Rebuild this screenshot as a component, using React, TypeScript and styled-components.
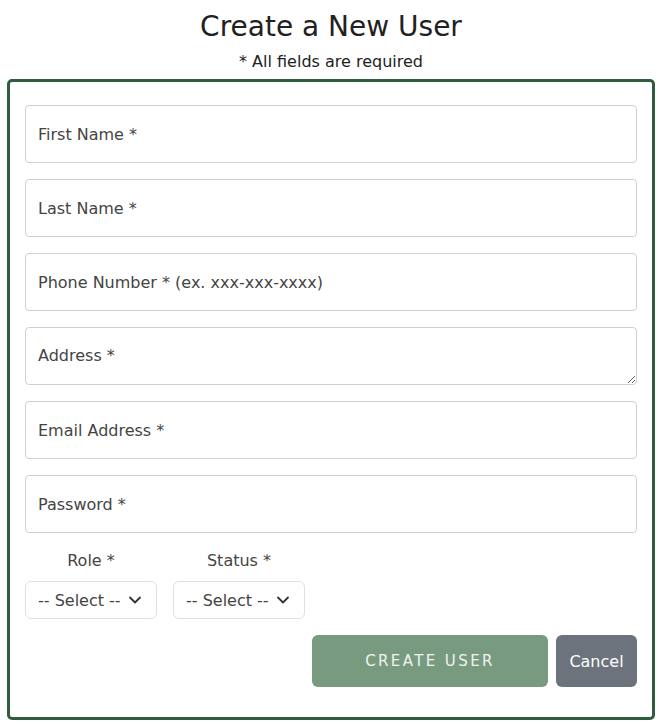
import React from 'react';
import styled, { createGlobalStyle } from 'styled-components';
import { ChevronDown } from 'lucide-react';

const GlobalStyle = createGlobalStyle`
  body {
    margin: 0;
    background: #ffffff;
    font-family: "DejaVu Sans", "Open Sans", sans-serif;
    color: #222;
  }
`;

const Page = styled.div`
  width: 662px;
  padding: 0 7px 8px;
  box-sizing: border-box;
`;

const Title = styled.h1`
  margin: 0;
  padding-top: 8px;
  font-size: 28px;
  font-weight: 400;
  line-height: 38px;
  text-align: center;
  color: #212121;
`;

const Subtitle = styled.p`
  margin: 6px 0 7px;
  font-size: 16px;
  line-height: 20px;
  text-align: center;
  color: #222;
`;

const Card = styled.form`
  border: 3px solid #2f5d3d;
  border-radius: 5px;
  padding: 23px 15px 30px;
  display: flex;
  flex-direction: column;
  gap: 16px;
`;

const TextInput = styled.input`
  height: 58px;
  box-sizing: border-box;
  padding: 0 12px;
  border: 1px solid #cfcfcf;
  border-radius: 4px;
  font-family: inherit;
  font-size: 16px;
  color: #333;
  outline: none;

  &::placeholder {
    color: #444;
  }
`;

const TextArea = styled.textarea`
  height: 58px;
  box-sizing: border-box;
  padding: 18px 12px 0;
  border: 1px solid #cfcfcf;
  border-radius: 4px;
  font-family: inherit;
  font-size: 16px;
  line-height: 20px;
  color: #333;
  outline: none;

  &::placeholder {
    color: #444;
  }
`;

const SelectRow = styled.div`
  display: flex;
  gap: 16px;
  margin-top: 2px;
`;

const SelectGroup = styled.label`
  display: flex;
  flex-direction: column;
  align-items: center;
  gap: 10px;
  width: 132px;
  font-size: 16px;
  line-height: 20px;
  color: #444;
`;

const SelectWrap = styled.div`
  position: relative;
  width: 132px;
  height: 38px;

  svg {
    position: absolute;
    right: 12px;
    top: 9px;
    pointer-events: none;
    color: #333;
  }
`;

const Select = styled.select`
  appearance: none;
  width: 100%;
  height: 100%;
  padding: 0 0 0 12px;
  border: 1px solid #e0e0e0;
  border-radius: 6px;
  background: #fff;
  font-family: inherit;
  font-size: 16px;
  color: #444;
  outline: none;
`;

const ButtonRow = styled.div`
  display: flex;
  justify-content: flex-end;
  gap: 8px;
`;

const Button = styled.button<{ $variant: 'primary' | 'secondary' }>`
  height: 52px;
  border: none;
  border-radius: 6px;
  font-family: inherit;
  font-size: ${p => (p.$variant === 'primary' ? '15px' : '16px')};
  letter-spacing: ${p => (p.$variant === 'primary' ? '2.4px' : '0')};
  text-transform: ${p => (p.$variant === 'primary' ? 'uppercase' : 'none')};
  width: ${p => (p.$variant === 'primary' ? '236px' : '81px')};
  background: ${p => (p.$variant === 'primary' ? '#789b80' : '#6c737d')};
  color: ${p => (p.$variant === 'primary' ? '#eef3ef' : '#ffffff')};
  cursor: pointer;
`;

const fields = [
  'First Name *',
  'Last Name *',
  'Phone Number * (ex. xxx-xxx-xxxx)',
];

const App: React.FC = () => {
  return (
    <Page>
      <GlobalStyle />
      <Title>Create a New User</Title>
      <Subtitle>* All fields are required</Subtitle>
      <Card onSubmit={e => e.preventDefault()}>
        {fields.map(f => (
          <TextInput key={f} placeholder={f} />
        ))}
        <TextArea placeholder="Address *" />
        <TextInput placeholder="Email Address *" />
        <TextInput type="password" placeholder="Password *" />
        <SelectRow>
          <SelectGroup>
            Role *
            <SelectWrap>
              <Select defaultValue="">
                <option value="">-- Select --</option>
                <option value="admin">Admin</option>
                <option value="user">User</option>
              </Select>
              <ChevronDown size={20} strokeWidth={2.2} />
            </SelectWrap>
          </SelectGroup>
          <SelectGroup>
            Status *
            <SelectWrap>
              <Select defaultValue="">
                <option value="">-- Select --</option>
                <option value="active">Active</option>
                <option value="inactive">Inactive</option>
              </Select>
              <ChevronDown size={20} strokeWidth={2.2} />
            </SelectWrap>
          </SelectGroup>
        </SelectRow>
        <ButtonRow>
          <Button $variant="primary" type="submit">Create User</Button>
          <Button $variant="secondary" type="button">Cancel</Button>
        </ButtonRow>
      </Card>
    </Page>
  );
};

export default App;
